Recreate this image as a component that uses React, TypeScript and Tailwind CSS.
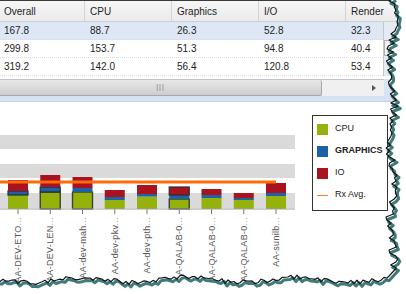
const columns = ["Overall", "CPU", "Graphics", "I/O", "Render"];

const rows = [
  ["167.8", "88.7", "26.3", "52.8", "32.3"],
  ["299.8", "153.7", "51.3", "94.8", "40.4"],
  ["319.2", "142.0", "56.4", "120.8", "53.4"],
];

const colWidth = ["w-[85px]", "w-[87px]", "w-[87px]", "w-[87px]", "w-[38px]"];

type Bar = {
  label: string;
  red: [number, number];
  blue: [number, number];
  green: [number, number];
  hl: ("red" | "blue" | "green")[];
};

const bars: Bar[] = [
  { label: "AA-DEV-ETO", red: [180, 191], blue: [191, 195], green: [195, 209], hl: ["blue"] },
  { label: "AA-DEV-LEN", red: [175, 187], blue: [187, 192], green: [192, 209], hl: ["blue", "green"] },
  { label: "AA-dev-mah", red: [177, 188], blue: [188, 192], green: [192, 209], hl: ["green"] },
  { label: "AA-dev-pkv", red: [190, 197], blue: [197, 200], green: [200, 209], hl: [] },
  { label: "AA-dev-pth", red: [185, 194], blue: [194, 196.5], green: [196.5, 209], hl: [] },
  { label: "AA-QALAB-0", red: [187, 195], blue: [195, 199], green: [199, 209], hl: ["red", "green"] },
  { label: "AA-QALAB-0", red: [189, 195], blue: [195, 198], green: [198, 209], hl: [] },
  { label: "AA-QALAB-0", red: [193, 198], blue: [198, 200], green: [200, 209], hl: [] },
  { label: "AA-sunilb", red: [183, 193], blue: [193, 196], green: [196, 209], hl: [] },
];

const colors = { red: "#a8131f", blue: "#1c62a8", green: "#95b10b" };

function rnd(i: number) {
  const v = Math.sin(i * 127.1 + 311.7) * 43758.5453;
  return v - Math.floor(v);
}

// jagged "torn paper" outline around the right and bottom sides
function edgePoints() {
  const pts: [number, number][] = [];
  let i = 0;
  for (let y = -2; y <= 270; y += 3) {
    pts.push([392 + (rnd(i++) - 0.5) * 8 + 2.5 * Math.sin(y / 13), y]);
  }
  pts.push([390, 275]);
  for (let x = 387; x >= -4; x -= 3) {
    pts.push([x, 280 + (rnd(i++) - 0.5) * 5 + 2.5 * Math.sin(x / 17)]);
  }
  return pts;
}

function TornEdge() {
  const pts = edgePoints();
  const line = pts.map((p) => p.join(",")).join(" ");
  const shadow = pts.map(([x, y]) => `${x + 2},${y + 2.5}`).join(" ");
  const outside = `${line} -4,300 410,300 410,-4`;
  return (
    <svg className="pointer-events-none absolute inset-0" width={406} height={294}>
      <polygon points={outside} fill="#ffffff" />
      <polyline points={shadow} fill="none" stroke="#3f7b7b" strokeWidth={3} strokeLinejoin="round" />
      <polyline points={line} fill="none" stroke="#151515" strokeWidth={1.2} strokeLinejoin="round" />
    </svg>
  );
}

function Chart() {
  return (
    <svg width={300} height={192} viewBox="0 102 300 192" className="shrink-0">
      <rect x={0} y={135} width={295} height={14} fill="#dadada" />
      <rect x={0} y={164} width={295} height={14} fill="#dadada" />
      <rect x={0} y={193} width={295} height={15} fill="#dadada" />
      {bars.map((b, i) => {
        const cx = 18 + i * 32.25;
        const x = cx - 10;
        return (
          <g key={i}>
            {(["green", "blue", "red"] as const).map((k) => {
              const [y1, y2] = b[k];
              const hl = b.hl.includes(k);
              return (
                <rect
                  key={k}
                  x={x}
                  y={y1}
                  width={20}
                  height={y2 - y1}
                  fill={colors[k]}
                  stroke={hl ? "#2a2a2a" : "none"}
                  strokeWidth={hl ? 1.4 : 0}
                  strokeOpacity={0.85}
                />
              );
            })}
            <line x1={cx} y1={209} x2={cx} y2={214} stroke="#777" strokeWidth={1} />
            <text
              transform={`translate(${cx + 3},217) rotate(-90)`}
              textAnchor="end"
              fontSize={9}
              letterSpacing={0.3}
              fontFamily="Liberation Sans, Arial, sans-serif"
              fill="#555"
            >
              {b.label}
              <tspan fill="#c07a7a">...</tspan>
            </text>
          </g>
        );
      })}
      <line x1={0} y1={182} x2={276} y2={182} stroke="#ff6a0a" strokeWidth={3} />
      <line x1={0} y1={209} x2={295} y2={209} stroke="#a0a0a0" strokeWidth={1.2} />
    </svg>
  );
}

function Legend() {
  const items = [
    { name: "CPU", color: colors.green },
    { name: "GRAPHICS", color: colors.blue, bold: true },
    { name: "IO", color: colors.red },
  ];
  return (
    <div className="ml-[12px] mt-[13px] flex h-[96px] w-[76px] flex-col gap-[12px] border border-[#333] pl-[4px] pt-[8px] text-[9px] text-[#222]">
      {items.map((it) => (
        <div key={it.name} className="flex h-[10px] items-center gap-[7px]">
          <span className="h-[11px] w-[11px] shrink-0" style={{ backgroundColor: it.color }} />
          <span className={it.bold ? "font-bold" : ""}>{it.name}</span>
        </div>
      ))}
      <div className="flex h-[10px] items-center gap-[7px]">
        <span className="h-px w-[11px] shrink-0 bg-[#ff7a2a]" />
        <span>Rx Avg.</span>
      </div>
    </div>
  );
}

export default function App() {
  return (
    <div className="relative h-[294px] w-[406px] overflow-hidden bg-white font-['Liberation_Sans',Arial,sans-serif] text-[10px] text-[#1e1e1e]">
      <div className="flex h-[22px] border-t border-b border-t-[#3a3a3a] border-b-[#d0d0d0] bg-gradient-to-b from-[#f6f6f6] to-[#ebebeb]">
        {columns.map((c, i) => (
          <div
            key={c}
            className={`${i === 4 ? "flex-1" : colWidth[i]} flex items-center border-r border-[#d4d4d4] ${i === 0 ? "pl-[4px]" : "pl-[5px]"}`}
          >
            {c}
          </div>
        ))}
      </div>

      <div className="flex">
        <div className="w-[384px] border-r border-[#c8c8c8]">
          {rows.map((r, ri) => (
            <div
              key={ri}
              className={`flex h-[18px] items-center border-b border-dotted border-[#dcdcdc] ${ri === 0 ? "bg-[#dde7f5]" : "bg-white"}`}
            >
              {r.map((v, ci) => (
                <div key={ci} className={`${ci === 4 ? "flex-1" : colWidth[ci]} ${ci === 0 ? "pl-[4px]" : "pl-[5px]"}`}>
                  {v}
                </div>
              ))}
            </div>
          ))}
        </div>
        <div className="flex-1 bg-[#e4ebf5] pt-[18px]">
          <div className="h-[16px] border border-[#b0b0b0] bg-[#f4f4f4]" />
        </div>
      </div>

      <div className="h-[3px] w-[384px] bg-white" />
      <div className="flex h-[17px]">
        <div className="flex w-[384px] items-center border-t border-[#c4c4c4] bg-[#f0f0f0]">
          <div className="flex h-full w-[322px] items-center justify-center rounded-r-[2px] border-r border-b border-[#a8a8a8] bg-gradient-to-b from-[#e8e8e8] to-[#cdcdcd]">
            <span className="tracking-[1px] text-[7px] text-[#777]">|||</span>
          </div>
          <div className="flex flex-1 justify-end pr-[8px]">
            <span className="h-0 w-0 border-y-[3.5px] border-l-[4px] border-y-transparent border-l-[#555]" />
          </div>
        </div>
        <div className="flex-1 bg-[#d8e3f3]" />
      </div>
      <div className="h-[6px] border-b border-[#c3d3ea] bg-[#d6e2f4]" />

      <div className="flex">
        <Chart />
        <Legend />
      </div>

      <TornEdge />
    </div>
  );
}
